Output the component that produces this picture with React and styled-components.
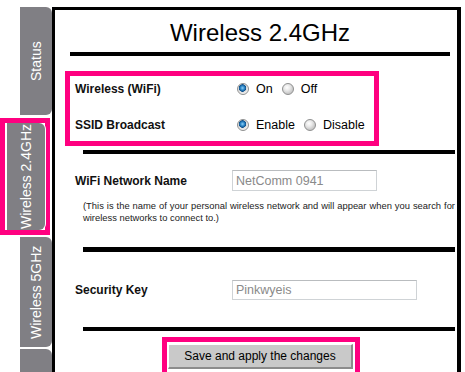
import React from "react";
import styled, { createGlobalStyle } from "styled-components";

const pink = "#ff0080";

const GlobalStyle = createGlobalStyle`
  html, body {
    margin: 0;
    padding: 0;
    background: #ffffff;
    overflow: hidden;
  }
  body {
    font-family: "Liberation Sans", Arial, sans-serif;
    color: #000;
  }
`;

function App() {
  return (
    <Page>
      <GlobalStyle />
      <Sidebar>
        <Tab $height={108}>Status</Tab>
        <TabHighlight>
          <Tab $height={107} $active>Wireless 2.4GHz</Tab>
        </TabHighlight>
        <Tab $height={110} $gap={2}>Wireless 5GHz</Tab>
        <Tab $height={40} $gap={2} />
      </Sidebar>

      <Panel>
        <TitleBlock>
          <h1>Wireless 2.4GHz</h1>
        </TitleBlock>

        <RadioBox>
          <RadioRow>
            <Label $wide>Wireless (WiFi)</Label>
            <Options>
              <Option>
                <Radio $checked /> On
              </Option>
              <Option>
                <Radio /> Off
              </Option>
            </Options>
          </RadioRow>
          <RadioRow>
            <Label $wide>SSID Broadcast</Label>
            <Options>
              <Option>
                <Radio $checked /> Enable
              </Option>
              <Option>
                <Radio /> Disable
              </Option>
            </Options>
          </RadioRow>
        </RadioBox>

        <Rule $top={4} />

        <FieldRow $top={16}>
          <Label>WiFi Network Name</Label>
          <TextBox $width={145} $height={21}>NetComm 0941</TextBox>
        </FieldRow>
        <Hint>
          (This is the name of your personal wireless network and will appear when you search for
          wireless networks to connect to.)
        </Hint>

        <Rule $top={23} $thick={5} />

        <FieldRow $top={28}>
          <Label>Security Key</Label>
          <TextBox $width={185} $height={20}>Pinkwyeis</TextBox>
        </FieldRow>

        <Rule $top={27} />

        <ButtonFrame>
          <SaveButton>Save and apply the changes</SaveButton>
        </ButtonFrame>
      </Panel>
    </Page>
  );
}

export default App;

const Page = styled.div`
  display: flex;
  width: 465px;
  height: 372px;
  overflow: hidden;
`;

const Sidebar = styled.div`
  width: 52px;
  flex-shrink: 0;
  display: flex;
  flex-direction: column;
  padding-top: 7px;
`;

const Tab = styled.div`
  box-sizing: border-box;
  margin-left: ${(p) => (p.$active ? "0" : "20px")};
  margin-top: ${(p) => p.$gap || 0}px;
  width: ${(p) => (p.$active ? "38px" : "32px")};
  height: ${(p) => p.$height}px;
  flex-shrink: 0;
  background: #807f84;
  border-radius: 6px 0 0 6px;
  ${(p) => p.$active && "box-shadow: -1px 0 0 #ffffff;"}
  display: flex;
  align-items: center;
  justify-content: center;
  writing-mode: vertical-rl;
  transform: rotate(180deg);
  color: #ffffff;
  font-size: 14px;
  white-space: nowrap;
`;

const TabHighlight = styled.div`
  box-sizing: border-box;
  margin-top: 3px;
  width: 50px;
  height: 117px;
  border: 5px solid ${pink};
  padding-left: 2px;
  flex-shrink: 0;
`;

const Panel = styled.div`
  flex: 1;
  margin-top: 7px;
  margin-right: 4px;
  border-top: 3px solid #000;
  border-left: 3px solid #000;
  border-right: 4px solid #000;
  display: flex;
  flex-direction: column;
  align-items: flex-start;
  overflow: hidden;

  & > * {
    flex-shrink: 0;
  }
`;

const TitleBlock = styled.div`
  align-self: stretch;
  margin: 0 7px 0 15px;
  padding-top: 9px;
  height: 33px;
  border-bottom: 4px solid #000;
  text-align: center;

  h1 {
    margin: 0;
    font-size: 24px;
    font-weight: normal;
    line-height: 27px;
  }
`;

const RadioBox = styled.div`
  box-sizing: border-box;
  margin: 15px 0 0 10px;
  width: 314px;
  height: 75px;
  border: 5px solid ${pink};
  padding: 0 0 0 5px;
  display: flex;
  flex-direction: column;
  gap: 10px;
`;

const RadioRow = styled.div`
  display: flex;
  align-items: center;
  height: 26px;
`;

const Label = styled.div`
  width: ${(p) => (p.$wide ? 162 : 157)}px;
  flex-shrink: 0;
  font-size: 12px;
  font-weight: bold;
  color: #111;
`;

const Options = styled.div`
  display: flex;
  align-items: center;
  gap: 9px;
`;

const Option = styled.label`
  display: flex;
  align-items: center;
  gap: 7px;
  font-size: 12.5px;
  color: #000;
`;

const Radio = styled.span`
  box-sizing: border-box;
  width: 12px;
  height: 12px;
  border-radius: 50%;
  border: 1px solid #8e8f8f;
  background: ${(p) =>
    p.$checked
      ? "radial-gradient(circle at 45% 40%, #8fd0f7 0, #2f88c8 2px, #0d4f8a 3.5px, #dcdcdc 4px, #f4f4f4 6px)"
      : "radial-gradient(circle at 40% 35%, #ffffff 0, #e9e9e9 3px, #c9c9c9 6px)"};
  flex-shrink: 0;
`;

const Rule = styled.div`
  align-self: stretch;
  margin: ${(p) => p.$top}px 2px 0 28px;
  height: ${(p) => p.$thick || 4}px;
  background: #000;
`;

const FieldRow = styled.div`
  display: flex;
  align-items: center;
  margin: ${(p) => p.$top}px 0 0 20px;
`;

const TextBox = styled.div`
  box-sizing: border-box;
  width: ${(p) => p.$width}px;
  height: ${(p) => p.$height}px;
  border: 1px solid #cfd3d6;
  border-top-color: #b9bcbf;
  padding: 0 3px;
  display: flex;
  align-items: center;
  font-size: 12.5px;
  color: #8a8a8a;
`;

const Hint = styled.p`
  align-self: stretch;
  margin: 9px 2px 0 28px;
  font-size: 9.4px;
  line-height: 12px;
  text-align: justify;
  color: #222;
`;

const ButtonFrame = styled.div`
  box-sizing: border-box;
  margin: 6px 0 0 107px;
  width: 198px;
  border: 5px solid ${pink};
  padding: 2px 2px 8px 1px;
`;

const SaveButton = styled.button`
  box-sizing: border-box;
  width: 185px;
  height: 25px;
  background: #c9c9c9;
  border: none;
  border-top: 1px solid #ffffff;
  border-left: 1px solid #ffffff;
  border-right: 2px solid #8c8c8c;
  border-bottom: 2px solid #8c8c8c;
  font-family: "Liberation Sans", Arial, sans-serif;
  font-size: 12px;
  color: #000;
  padding: 0;
`;
